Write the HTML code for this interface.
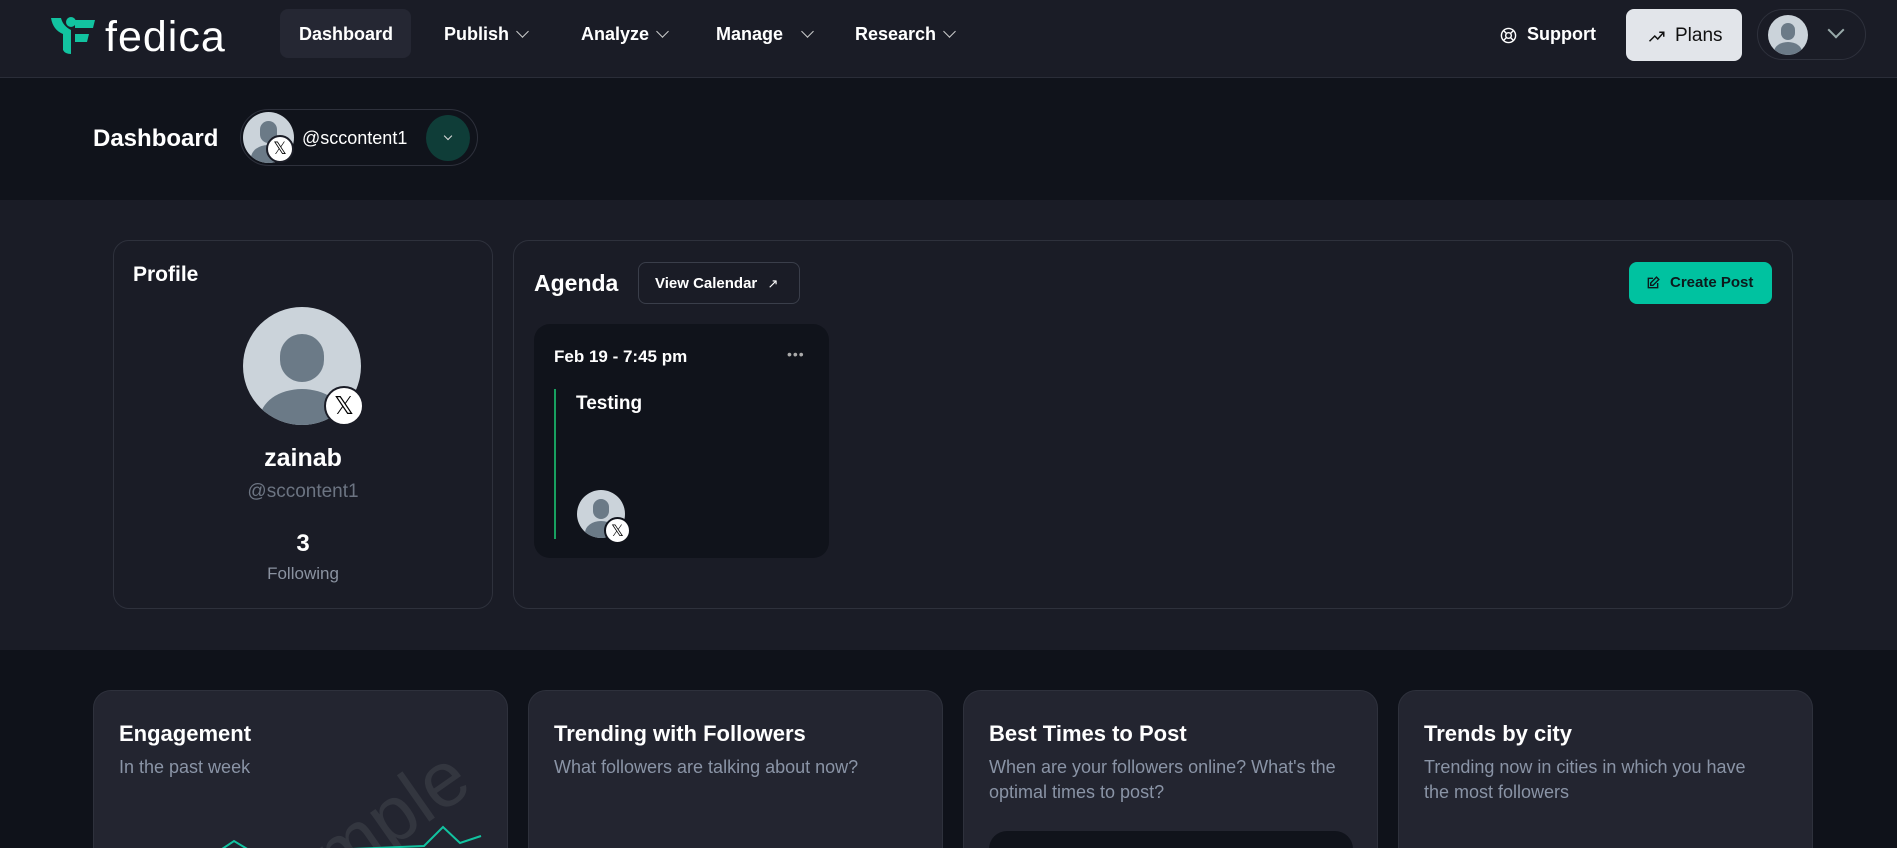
<!DOCTYPE html>
<html><head><meta charset="utf-8"><style>
*{box-sizing:border-box;margin:0;padding:0}
html,body{width:1897px;height:848px;overflow:hidden}
body{background:#0f121a;font-family:"Liberation Sans",Arial,sans-serif;color:#fff;position:relative}
.abs{position:absolute}
.nav{left:0;top:0;width:1897px;height:78px;background:#1a1c26;border-bottom:1px solid #2a2d38}
.ni{position:absolute;top:24px;font-size:18px;font-weight:bold;color:#fff}
.chev{display:inline-block;width:9px;height:9px;border-right:1.5px solid #ccc;border-bottom:1.5px solid #ccc;transform:rotate(45deg);margin-left:9px;position:relative;top:-4px}
.sec1{left:0;top:78px;width:1897px;height:122px;background:#10131b}
.sec2{left:0;top:200px;width:1897px;height:450px;background:#1a1c26}
.card{border:1px solid #2e313c;border-radius:16px}
.bc{position:absolute;top:690px;width:415px;height:180px;background:#232530;border:1px solid #2e313c;border-radius:18px;padding:30px 25px;overflow:hidden}
.bc h3{font-size:22px;font-weight:bold;margin-bottom:8px}
.bc p{font-size:18px;color:#8a94a6;line-height:25px}
.av{position:absolute;border-radius:50%;background:#cbd3da;overflow:hidden}
.xb{position:absolute;border-radius:50%;background:#fff;border:2px solid #1a1c26;color:#000;text-align:center;font-family:"DejaVu Sans",sans-serif}
</style></head><body>
<div class="abs nav">
  <svg class="abs" style="left:49px;top:16px" width="48" height="40" viewBox="0 0 48 40"><circle cx="22" cy="6" r="5" fill="#12c3a0"/><path d="M2 2 L12 2 Q14 10 22 14 L22 38 Q16 38 14 34 L14 18 Q4 14 2 2Z" fill="#12c3a0"/><path d="M26 4 L46 4 L44 12 L26 12Z M26 18 L40 18 L38 26 L26 26Z" fill="#12c3a0"/></svg>
  <div class="abs" style="left:105px;top:13px;font-size:43px;color:#fff;letter-spacing:1px">fedica</div>
  <div class="abs" style="left:280px;top:9px;width:131px;height:49px;background:#252733;border-radius:8px"></div>
  <div class="ni" style="left:299px">Dashboard</div>
  <div class="ni" style="left:444px">Publish<span class="chev"></span></div>
  <div class="ni" style="left:581px">Analyze<span class="chev"></span></div>
  <div class="ni" style="left:716px">Manage<span class="chev" style="margin-left:20px"></span></div>
  <div class="ni" style="left:855px">Research<span class="chev"></span></div>
  <svg class="abs" style="left:1500px;top:27px" width="17" height="17" viewBox="0 0 24 24" fill="none" stroke="#fff" stroke-width="2"><circle cx="12" cy="12" r="10"/><circle cx="12" cy="12" r="4"/><path d="M5 5l4 4M15 15l4 4M19 5l-4 4M5 19l4-4"/></svg>
  <div class="ni" style="left:1527px">Support</div>
  <div class="abs" style="left:1626px;top:9px;width:116px;height:52px;background:#e2e5ea;border-radius:8px"></div>
  <svg class="abs" style="left:1648px;top:28px" width="18" height="16" viewBox="0 0 24 20" fill="none" stroke="#111" stroke-width="2"><path d="M2 17l7-7 4 4 8-9M15 5h6v6"/></svg>
  <div class="ni" style="left:1675px;top:25px;color:#111;font-weight:normal;font-size:19px">Plans</div>
  <div class="abs" style="left:1757px;top:9px;width:109px;height:51px;border:1px solid #2e313c;border-radius:26px"></div>
  <div class="av" style="left:1768px;top:15px;width:40px;height:40px"><div class="abs" style="left:13px;top:8px;width:14px;height:17px;border-radius:7px;background:#6b7a87"></div><div class="abs" style="left:6px;top:27px;width:28px;height:20px;border-radius:50%;background:#6b7a87"></div></div>
  <span class="abs" style="left:1830px;top:24px;width:12px;height:12px;border-right:2px solid #9aa;border-bottom:2px solid #9aa;transform:rotate(45deg)"></span>
</div>
<div class="abs sec1"></div>
<div class="abs" style="left:93px;top:125px;font-size:24px;font-weight:bold">Dashboard</div>
<div class="abs" style="left:240px;top:109px;width:238px;height:57px;border:1px solid #2e313c;border-radius:29px;background:#10131b"></div>
<div class="av" style="left:243px;top:112px;width:51px;height:51px"><div class="abs" style="left:17px;top:9px;width:17px;height:22px;border-radius:9px;background:#6b7a87"></div><div class="abs" style="left:8px;top:33px;width:34px;height:26px;border-radius:50%;background:#6b7a87"></div></div>
<div class="xb" style="left:266px;top:135px;width:28px;height:28px;font-size:17px;line-height:24px">𝕏</div>
<div class="abs" style="left:302px;top:128px;font-size:18px;color:#fff">@sccontent1</div>
<div class="abs" style="left:426px;top:115px;width:44px;height:46px;border-radius:50%;background:#0f3d38"></div>
<span class="abs" style="left:445px;top:133px;width:6px;height:6px;border-right:1.5px solid #ddd;border-bottom:1.5px solid #ddd;transform:rotate(45deg)"></span>

<div class="abs sec2"></div>
<div class="abs card" style="left:113px;top:240px;width:380px;height:369px"></div>
<div class="abs" style="left:133px;top:263px;font-size:21px;font-weight:bold">Profile</div>
<div class="av" style="left:243px;top:307px;width:118px;height:118px"><div class="abs" style="left:37px;top:27px;width:44px;height:48px;border-radius:22px;background:#6b7a87"></div><div class="abs" style="left:17px;top:82px;width:84px;height:60px;border-radius:50%;background:#6b7a87"></div></div>
<div class="xb" style="left:324px;top:386px;width:40px;height:40px;font-size:25px;line-height:36px">𝕏</div>
<div class="abs" style="left:113px;top:444px;width:380px;text-align:center;font-size:25px;font-weight:bold">zainab</div>
<div class="abs" style="left:113px;top:481px;width:380px;text-align:center;font-size:19px;color:#6c7482">@sccontent1</div>
<div class="abs" style="left:113px;top:530px;width:380px;text-align:center;font-size:24px;font-weight:bold">3</div>
<div class="abs" style="left:113px;top:564px;width:380px;text-align:center;font-size:17px;color:#8a92a0">Following</div>

<div class="abs card" style="left:513px;top:240px;width:1280px;height:369px"></div>
<div class="abs" style="left:534px;top:270px;font-size:23px;font-weight:bold">Agenda</div>
<div class="abs" style="left:638px;top:262px;width:162px;height:42px;border:1px solid #3a3e4a;border-radius:8px;font-size:15px;font-weight:bold;padding:12px 0 0 16px">View Calendar <span style="font-weight:normal;font-size:13px;margin-left:6px">↗</span></div>
<div class="abs" style="left:1629px;top:262px;width:143px;height:42px;background:#00c2a0;border-radius:8px;color:#0c1a1c;font-size:15px;font-weight:bold;padding:12px 0 0 41px">Create Post</div>
<svg class="abs" style="left:1646px;top:276px" width="14" height="14" viewBox="0 0 24 24" fill="none" stroke="#0c1a1c" stroke-width="2.4"><path d="M12 4H4v16h16v-8M18 2l4 4-10 10H8v-4z"/></svg>
<div class="abs" style="left:534px;top:324px;width:295px;height:234px;background:#10131b;border-radius:16px"></div>
<div class="abs" style="left:554px;top:347px;font-size:17px;font-weight:bold">Feb 19 - 7:45 pm</div>
<div class="abs" style="left:787px;top:346px;font-size:14px;color:#aaa;letter-spacing:1px">•••</div>
<div class="abs" style="left:554px;top:389px;width:2px;height:150px;background:#18a060"></div>
<div class="abs" style="left:576px;top:393px;font-size:19px;font-weight:bold">Testing</div>
<div class="av" style="left:577px;top:490px;width:48px;height:48px"><div class="abs" style="left:16px;top:9px;width:16px;height:20px;border-radius:8px;background:#6b7a87"></div><div class="abs" style="left:8px;top:31px;width:32px;height:24px;border-radius:50%;background:#6b7a87"></div></div>
<div class="xb" style="left:604px;top:517px;width:27px;height:27px;font-size:16px;line-height:23px;border-color:#10131b">𝕏</div>

<div class="bc" style="left:93px"><h3>Engagement</h3><p>In the past week</p>
<div class="abs" style="left:175px;top:175px;font-size:78px;color:#33363f;transform:rotate(-35deg);transform-origin:left bottom">Sample</div>
<svg class="abs" style="left:0;top:0" width="415" height="180"><polyline points="110,170 140,150 160,162 330,155 349,136 366,152 387,145" fill="none" stroke="#12c3a0" stroke-width="2"/></svg></div>
<div class="bc" style="left:528px"><h3>Trending with Followers</h3><p>What followers are talking about now?</p></div>
<div class="bc" style="left:963px"><h3>Best Times to Post</h3><p>When are your followers online? What's the optimal times to post?</p>
<div class="abs" style="left:25px;top:140px;width:364px;height:60px;background:#10131b;border-radius:18px"></div></div>
<div class="bc" style="left:1398px;padding-right:40px"><h3>Trends by city</h3><p>Trending now in cities in which you have the most followers</p></div>
</body></html>
